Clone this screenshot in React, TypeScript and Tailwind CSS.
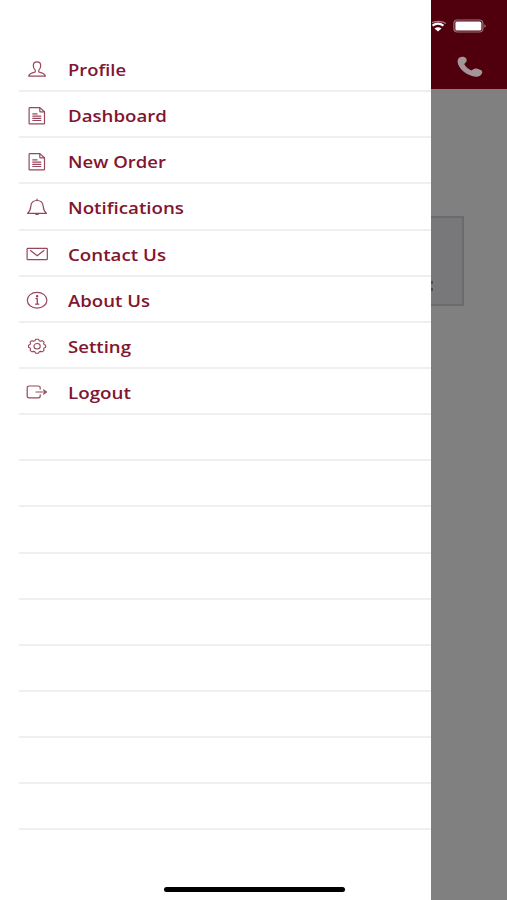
import type { ReactNode } from "react";

type MenuItem = {
  label: string;
  width: string;
  icon: ReactNode;
};

const documentIcon = (
  <>
    <path d="M5 2.600h9.800l4.700 4.200v11.500c0 .4-.2.600-.6.600H4.700c-.4 0-.6-.2-.6-.6V3.200c0-.4.300-.6.900-.6z" />
    <path d="M14.800 2.800v3.200c0 .6.300.9.900.9h3.500M7.800 8.900h4.200M7.800 11.200h8M7.800 13.400h8M7.800 15.500h8" />
  </>
);

const items: MenuItem[] = [
  {
    label: "Profile",
    width: "w-[58px]",
    icon: (
      <path d="M12 2.800c-2.300 0-3.700 1.500-3.700 3.700 0 2 .7 3.600 1.900 4.600v1.700c-1 1.100-6 1-6.500 4.400h16.600c-.5-3.400-5.500-3.300-6.500-4.400v-1.700c1.200-1 1.900-2.600 1.900-4.600 0-2.200-1.400-3.700-3.700-3.700z" />
    ),
  },
  { label: "Dashboard", width: "w-[99px]", icon: documentIcon },
  { label: "New Order", width: "w-[98px]", icon: documentIcon },
  {
    label: "Notifications",
    width: "w-[116px]",
    icon: (
      <>
        <path d="M2.500 16.400h19c-2.300-2-3.100-4.200-3.300-7.200-.3-3.500-2.400-5.700-6.200-5.700s-5.900 2.200-6.200 5.700c-.2 3-1 5.200-3.300 7.200z" />
        <path d="M12 2.100v1.400M10.800 17.400h2.400" />
      </>
    ),
  },
  {
    label: "Contact Us",
    width: "w-[98px]",
    icon: (
      <>
        <rect x="2.100" y="4.300" width="20.200" height="11.400" rx=".8" />
        <path d="M5.500 6.500l6.700 5.300 6.700-5.300" />
      </>
    ),
  },
  {
    label: "About Us",
    width: "w-[82px]",
    icon: (
      <>
        <ellipse cx="12.100" cy="10.200" rx="9.800" ry="7.900" />
        <path d="M10.900 8.600h1.400v5.500M10.600 14.200h3.200" strokeWidth="1.300" />
        <circle cx="12.100" cy="6.200" r=".7" fill="currentColor" />
      </>
    ),
  },
  {
    label: "Setting",
    width: "w-[63px]",
    icon: (
      <g transform="translate(1.200 .800) scale(.9)">
        <path d="M10.500 2.700h3.200l.8 1.600 1.400.5 2-.5 2 1.600-.6 1.600.6 1.100 1.700.7v2.400l-1.700.7-.6 1.100.6 1.600-2 1.600-2-.5-1.400.5-.8 1.600h-3.200l-.8-1.600-1.400-.5-2 .5-2-1.600.6-1.600-.6-1.100-1.700-.7V9.300l1.700-.7.600-1.100-.6-1.600 2-1.600 2 .5 1.400-.5z" />
        <ellipse cx="12.100" cy="10.500" rx="3.500" ry="3" />
      </g>
    ),
  },
  {
    label: "Logout",
    width: "w-[63px]",
    icon: (
      <path d="M15.200 7V5.900c0-1.200-.8-1.900-2-1.900H4.300c-1.300 0-2.100.7-2.100 1.900v8c0 1.200.8 1.900 2.100 1.900h8.900c1.200 0 2-.7 2-1.900v-1.100M11 10h10.300M18.600 7.900l2.900 2.100-2.900 2.100" />
    ),
  },
];

const emptyRows = Array.from({ length: 9 }, (_, i) => i);

function MenuRow({ item }: { item: MenuItem }) {
  return (
    <li className="flex h-[46.15px] items-center border-b-2 border-[#efefef] pl-[6px] pt-[2px]">
      <svg
        viewBox="0 0 24 20"
        className="h-5 w-6 shrink-0 text-[#95485d]"
        fill="none"
        stroke="currentColor"
        strokeWidth="1.200"
        strokeLinecap="round"
        strokeLinejoin="round"
      >
        {item.icon}
      </svg>
      <svg className={`ml-[19px] h-6 shrink-0 overflow-visible ${item.width}`} aria-label={item.label}>
        <text
          x="0"
          y="19"
          textLength="100%"
          lengthAdjust="spacingAndGlyphs"
          className="fill-[#82152f] font-['Open_Sans',sans-serif] text-[15.5px] font-semibold"
        >
          {item.label}
        </text>
      </svg>
    </li>
  );
}

function Drawer() {
  return (
    <nav className="relative flex h-full w-[431px] shrink-0 flex-col bg-white pl-[19px] pt-[46px]">
      <ul>
        {items.map((item) => (
          <MenuRow key={item.label} item={item} />
        ))}
        {emptyRows.map((row) => (
          <li key={row} className="h-[46.15px] border-b-2 border-[#efefef]" />
        ))}
      </ul>
      <div className="absolute bottom-2 left-[163.5px] h-[5px] w-[181px] rounded-full bg-black" />
    </nav>
  );
}

function PageBehind() {
  return (
    <main className="flex h-full flex-1 flex-col bg-[#808080]">
      <header className="h-[89px] bg-[#50000d]">
        <div className="flex items-center pt-[19px]">
          <svg viewBox="0 0 16 14" className="h-[14px] w-4" fill="none">
            <path d="M1 3.700Q8.500.6 15 4.500" stroke="#a77b83" strokeWidth="1.300" />
            <path d="M1.500 6.600Q7 2.800 12.500 6.600" stroke="white" strokeWidth="2.200" />
            <path d="M3.500 9.600Q7 7 10.500 9.600L7 12.500z" fill="white" />
          </svg>
          <svg viewBox="0 0 34 14" className="ml-[6px] h-[14px] w-[34px]" fill="none">
            <rect x=".9" y="1" width="29" height="12" rx="3.500" stroke="#9c7078" strokeWidth="1.200" />
            <rect x="2.400" y="2.600" width="26" height="8.800" rx="1.500" fill="white" />
            <path d="M31.300 5.300c2 .5 2 2.900 0 3.400z" fill="#9c7078" />
          </svg>
        </div>
        <svg viewBox="0 0 26 22" className="ml-[26px] mt-[23px] h-[22px] w-[26px]" fill="#a49698">
          <path d="M1.200 2.900C2.200 1 5.400.3 7.700 1.300c2.300 1.100 2.700 3.800 1 5.300L7.200 7.900c1.300 2.900 4 5.200 7.300 6.500l1.800-1.200c1.200-.8 2.700-.9 4.100-.5l3.300 1.200c1.400.7 1.900 1.900 1.400 3.200-.8 2.500-3.300 3.900-6.600 3.600C9.300 19.700.9 12 .6 5.800c-.1-1.100.1-2.100.6-2.900z" />
        </svg>
      </header>
      <section className="mt-[127px] flex h-[90px] w-[33px] flex-col justify-end border-y-2 border-r-2 border-[#6b6b6d] bg-[#78787b] pb-[13px]">
        <div className="h-[3px] w-[2px] bg-[#4f4f52]" />
        <div className="mt-[4px] h-[3px] w-[2px] bg-[#4f4f52]" />
      </section>
    </main>
  );
}

export default function App() {
  return (
    <div className="flex h-[900px] w-[507px] overflow-hidden bg-white">
      <Drawer />
      <PageBehind />
    </div>
  );
}
